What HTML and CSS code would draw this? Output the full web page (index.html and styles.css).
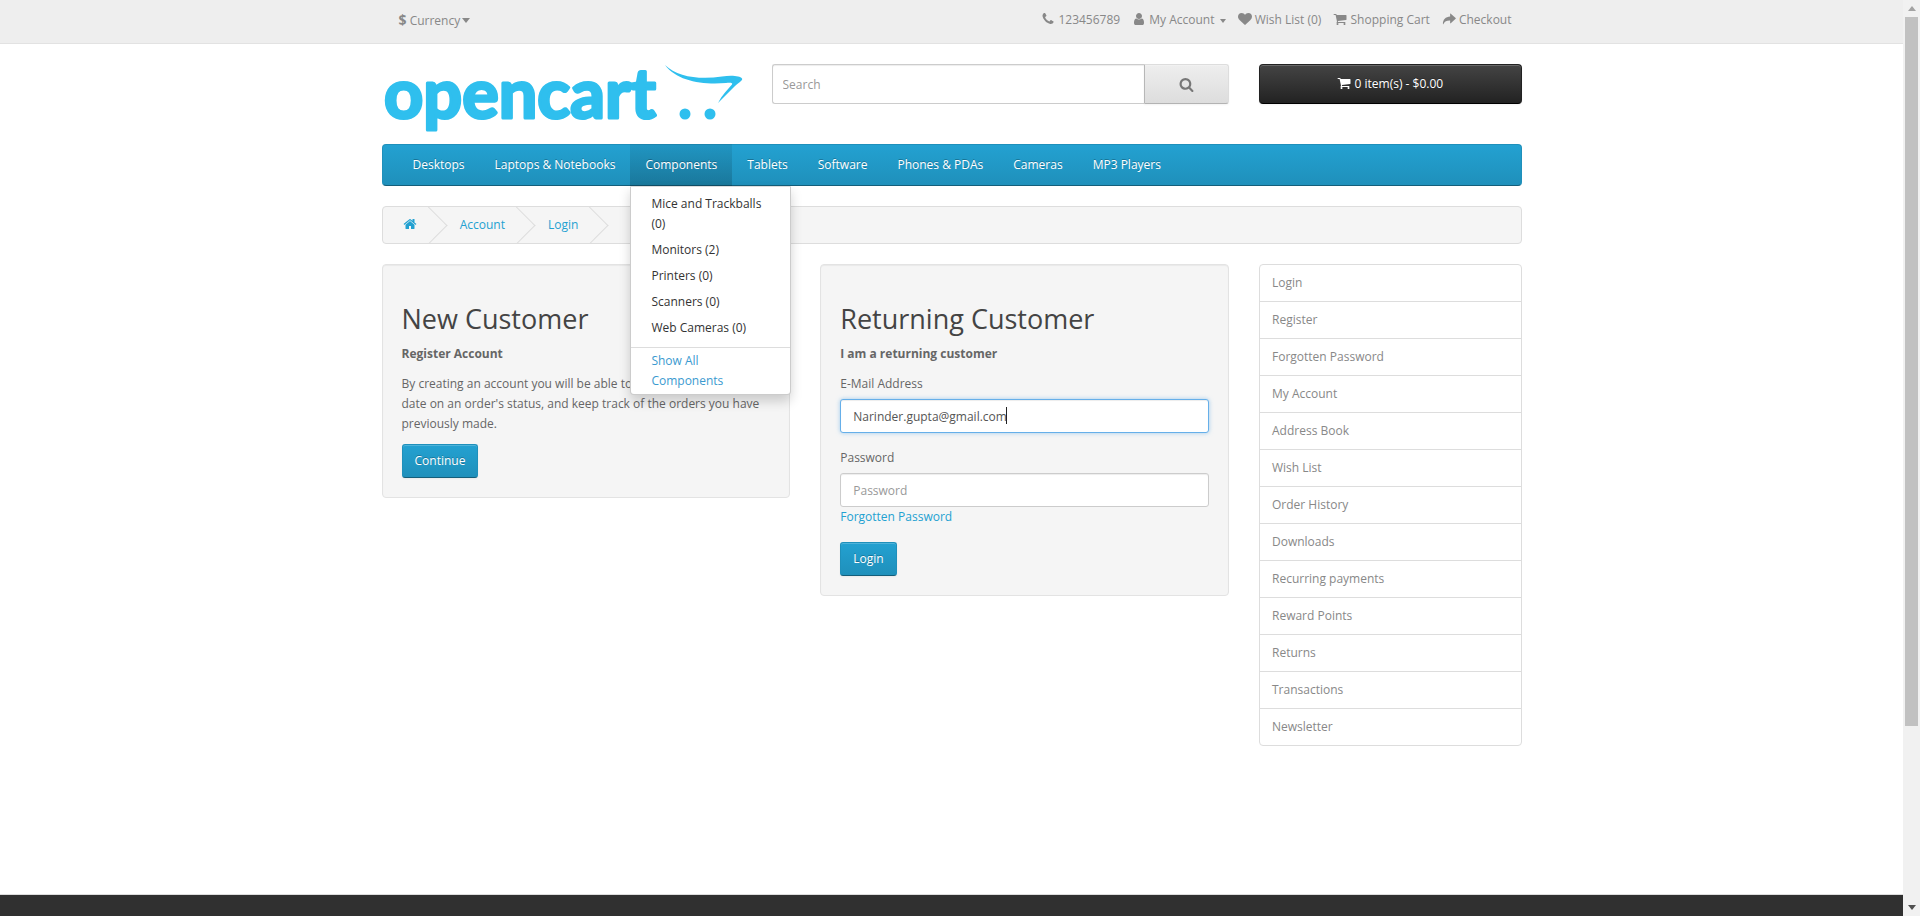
FILE: index.html

```html
<!DOCTYPE html>
<html lang="en">
<head>
    <meta charset="UTF-8">
    <meta name="viewport" content="width=device-width, initial-scale=1.0">
    <title>Account Login</title>
    <link rel="stylesheet" href="styles.css">
</head>
<body>
    <svg class="sprite" xmlns="http://www.w3.org/2000/svg">
        <symbol id="i-phone" viewBox="0 0 1792 1792"><path d="M1600 1240q0 27-10 70.5t-21 68.5q-21 50-122 106-94 51-186 51-27 0-53-3.5t-57.5-12.5-47-14.5-55.5-20.5-49-18q-98-35-175-83-127-79-264-216t-216-264q-48-77-83-175-3-9-18-49t-20.5-55.5-14.5-47-12.5-57.5-3.5-53q0-92 51-186 56-101 106-122 25-11 68.5-21t70.5-10q14 0 21 3 18 6 53 76 11 19 30 54t35 63.5 31 53.5q3 4 17.5 25t21.5 35.5 7 28.5q0 20-28.5 50t-62 55-62 53-28.5 46q0 9 5 22.5t8.5 20.5 14 24 11.5 19q76 137 174 235t235 174q2 1 19 11.5t24 14 20.5 8.5 22.5 5q18 0 46-28.5t53-62 55-62 50-28.5q14 0 28.5 7t35.5 21.5 25 17.5q25 15 53.5 31t63.5 35 54 30q70 35 76 53 3 7 3 21z"/></symbol>
        <symbol id="i-user" viewBox="0 0 1792 1792"><path d="M1536 1399q0 109-62.5 187t-150.5 78h-854q-88 0-150.5-78t-62.5-187q0-85 8.5-160.5t31.5-152 58.5-131 94-89 134.5-34.5q131 128 313 128t313-128q76 0 134.5 34.5t94 89 58.5 131 31.5 152 8.5 160.5zm-256-887q0 159-112.5 271.5t-271.5 112.5-271.5-112.5-112.5-271.5 112.5-271.5 271.5-112.5 271.5 112.5 112.5 271.5z"/></symbol>
        <symbol id="i-heart" viewBox="0 0 1792 1792"><path d="M896 1664q-26 0-44-18l-624-602q-10-8-27.5-26t-55.5-65.5-68-97.5-53.5-121-23.5-138q0-220 127-344t351-124q62 0 126.5 21.5t120 58 95.5 68.5 76 68q36-36 76-68t95.5-68.5 120-58 126.5-21.5q224 0 351 124t127 344q0 221-229 450l-623 600q-18 18-44 18z"/></symbol>
        <symbol id="i-cart" viewBox="0 0 1792 1792"><path d="M704 1536q0 52-38 90t-90 38-90-38-38-90 38-90 90-38 90 38 38 90zm896 0q0 52-38 90t-90 38-90-38-38-90 38-90 90-38 90 38 38 90zm128-1088v512q0 24-16.5 42.5t-40.5 21.5l-1044 122q13 60 13 70 0 16-24 64h920q26 0 45 19t19 45-19 45-45 19h-1024q-26 0-45-19t-19-45q0-11 8-31.5t16-36 21.5-40 15.5-29.5l-177-823h-204q-26 0-45-19t-19-45 19-45 45-19h256q16 0 28.5 6.5t19.5 15.5 13 24.5 8 26 5.5 29.5 4.5 26h1201q26 0 45 19t19 45z"/></symbol>
        <symbol id="i-share" viewBox="0 0 16 16"><path d="M9.3 2.2c0-.4.4-.6.7-.3l5.6 5c.3.2.3.6 0 .8L10 12.9c-.3.3-.7.1-.7-.3V9.8C5.6 9.7 2.9 10.600 1.500 14c-.1.200-.4.200-.4-.1C.8 8.800 4.200 5.400 9.300 5.100z"/></symbol>
        <symbol id="i-home" viewBox="0 0 1792 1792"><path d="M1472 992v480q0 26-19 45t-45 19h-384v-384h-256v384h-384q-26 0-45-19t-19-45v-480q0-1 .5-3t.5-3l575-474 575 474q1 2 1 6zm223-69l-62 74q-8 9-21 11h-3q-13 0-21-7l-692-577-692 577q-12 8-24 7-13-2-21-11l-62-74q-8-10-7-23.5t11-21.5l719-599q32-26 76-26t76 26l244 204v-195q0-14 9-23t23-9h192q14 0 23 9t9 23v408l219 182q10 8 11 21.500t-7 23.500z"/></symbol>
        <symbol id="i-search" viewBox="0 0 1792 1792"><path d="M1216 832q0-185-131.5-316.5t-316.5-131.5-316.5 131.5-131.5 316.5 131.5 316.5 316.5 131.5 316.5-131.5 131.5-316.5zm512 832q0 52-38 90t-90 38q-54 0-90-38l-343-342q-179 124-399 124-143 0-273.5-55.5t-225-150-150-225-55.5-273.5 55.5-273.5 150-225 225-150 273.5-55.5 273.5 55.5 225 150 150 225 55.5 273.5q0 220-124 399l343 343q37 37 37 90z"/></symbol>
    </svg>

    <div class="page">
        <nav class="top">
            <div class="container top-inner">
                <a class="currency" href="#"><b class="dollar">$</b> Currency<span class="caret"></span></a>
                <ul class="top-links">
                    <li><svg class="icon"><use href="#i-phone"/></svg> 123456789</li>
                    <li><a href="#"><svg class="icon"><use href="#i-user"/></svg> My Account <span class="caret caret-sm"></span></a></li>
                    <li><a href="#"><svg class="icon"><use href="#i-heart"/></svg> Wish List (0)</a></li>
                    <li><a href="#"><svg class="icon"><use href="#i-cart"/></svg> Shopping Cart</a></li>
                    <li><a href="#"><svg class="icon"><use href="#i-share"/></svg> Checkout</a></li>
                </ul>
            </div>
        </nav>

        <header class="container header">
            <a class="logo" href="#">
                <svg width="362" height="70" viewBox="0 0 362 70" xmlns="http://www.w3.org/2000/svg">
                    <text class="logo-text" x="2" y="54" textLength="272" lengthAdjust="spacingAndGlyphs">opencart</text>
                    <path class="logo-mark" d="M283 1C295 13 318 16 340 12.500C350 11 358 12 360 14.500C361 16 358 18 353 22L336 39C340 31 346 25 350 20.500C351 19 349 18.500 344 19C320 21 295 17 283 1Z"/>
                    <circle class="logo-mark" cx="303" cy="50" r="5.500"/>
                    <circle class="logo-mark" cx="328" cy="50" r="5.500"/>
                </svg>
            </a>
            <div class="search">
                <input class="search-input" type="text" placeholder="Search">
                <button class="search-btn" type="button"><svg class="icon icon-search"><use href="#i-search"/></svg></button>
            </div>
            <button class="cart-btn" type="button"><svg class="icon icon-cartbtn"><use href="#i-cart"/></svg> 0 item(s) - $0.00</button>
        </header>

        <div class="container">
            <nav class="menu">
                <ul class="menu-list">
                    <li><a href="#">Desktops</a></li>
                    <li><a href="#">Laptops &amp; Notebooks</a></li>
                    <li class="open">
                        <a href="#">Components</a>
                        <div class="dropdown">
                            <ul>
                                <li><a href="#">Mice and Trackballs (0)</a></li>
                                <li><a href="#">Monitors (2)</a></li>
                                <li><a href="#">Printers (0)</a></li>
                                <li><a href="#">Scanners (0)</a></li>
                                <li><a href="#">Web Cameras (0)</a></li>
                            </ul>
                            <a class="see-all" href="#">Show All Components</a>
                        </div>
                    </li>
                    <li><a href="#">Tablets</a></li>
                    <li><a href="#">Software</a></li>
                    <li><a href="#">Phones &amp; PDAs</a></li>
                    <li><a href="#">Cameras</a></li>
                    <li><a href="#">MP3 Players</a></li>
                </ul>
            </nav>

            <ul class="breadcrumb">
                <li><a href="#"><svg class="icon"><use href="#i-home"/></svg></a></li>
                <li><a href="#">Account</a></li>
                <li><a href="#">Login</a></li>
            </ul>

            <div class="main">
                <div class="content">
                    <div class="well">
                        <h2>New Customer</h2>
                        <p><strong>Register Account</strong></p>
                        <p>By creating an account you will be able to shop faster, be up to date on an order's status, and keep track of the orders you have previously made.</p>
                        <a class="btn" href="#">Continue</a>
                    </div>
                    <div class="well">
                        <h2>Returning Customer</h2>
                        <p><strong>I am a returning customer</strong></p>
                        <form>
                            <div class="form-group">
                                <label for="email">E-Mail Address</label>
                                <div class="field">
                                    <input class="form-control is-focus" type="text" id="email" value="Narinder.gupta@gmail.com">
                                    <span class="text-caret"></span>
                                </div>
                            </div>
                            <div class="form-group">
                                <label for="password">Password</label>
                                <input class="form-control" type="password" id="password" placeholder="Password">
                                <a class="forgot" href="#">Forgotten Password</a>
                            </div>
                            <a class="btn" href="#">Login</a>
                        </form>
                    </div>
                </div>
                <aside class="sidebar">
                    <a href="#">Login</a>
                    <a href="#">Register</a>
                    <a href="#">Forgotten Password</a>
                    <a href="#">My Account</a>
                    <a href="#">Address Book</a>
                    <a href="#">Wish List</a>
                    <a href="#">Order History</a>
                    <a href="#">Downloads</a>
                    <a href="#">Recurring payments</a>
                    <a href="#">Reward Points</a>
                    <a href="#">Returns</a>
                    <a href="#">Transactions</a>
                    <a href="#">Newsletter</a>
                </aside>
            </div>
        </div>

        <footer class="footer"></footer>
    </div>

    <div class="scrollbar">
        <span class="arrow arrow-up"></span>
        <span class="thumb"></span>
        <span class="arrow arrow-down"></span>
    </div>
</body>
</html>
```

FILE: styles.css

```css
* {
    box-sizing: border-box;
}

html, body {
    height: 916px;
    overflow: hidden;
}

body {
    margin: 0;
    display: flex;
    font-family: "Open Sans", sans-serif;
    font-size: 12px;
    line-height: 20px;
    color: #666;
    background: #fff;
}

a {
    text-decoration: none;
    color: #23a1d1;
}

ul {
    list-style: none;
    margin: 0;
    padding: 0;
}

.sprite {
    display: none;
}

.page {
    flex: 1;
    min-width: 0;
}

.container {
    width: 1140px;
    margin: 0 auto;
}

.icon {
    width: 14px;
    height: 14px;
    fill: currentColor;
    vertical-align: -2px;
}

/* top bar */
.top {
    height: 44px;
    margin-bottom: 20px;
    background: #eee;
    border-bottom: 1px solid #e2e2e2;
    color: #888;
}

.top-inner {
    display: flex;
    justify-content: space-between;
    padding: 10px 10px 0 17px;
}

.top a {
    color: #888;
}

.currency {
    display: block;
}

.dollar {
    font-size: 14px;
}

.caret {
    display: inline-block;
    margin-left: 2px;
    vertical-align: 2px;
    border-top: 5px solid #888;
    border-left: 4px solid transparent;
    border-right: 4px solid transparent;
}

.caret-sm {
    border-top-width: 4px;
    border-left-width: 3.500px;
    border-right-width: 3.500px;
    vertical-align: 1px;
}

.top-links {
    display: flex;
    gap: 12px;
}

/* header */
.header {
    display: flex;
    height: 80px;
}

.logo {
    display: block;
    width: 390px;
    height: 70px;
}

.logo svg {
    display: block;
}

.logo-text {
    font-family: Lato, sans-serif;
    font-weight: 700;
    font-size: 68px;
    fill: #2fbfee;
    stroke: #2fbfee;
    stroke-width: 3px;
    stroke-linejoin: round;
}

.logo-mark {
    fill: #2fbfee;
}

.search {
    display: flex;
    width: 457.500px;
    height: 40px;
}

.search-input {
    flex: 1;
    min-width: 0;
    height: 40px;
    padding: 10px;
    font: 12px/20px "Open Sans", sans-serif;
    color: #555;
    border: 1px solid #ccc;
    border-right: 0;
    border-radius: 3px 0 0 3px;
    box-shadow: inset 0 1px 1px rgba(0, 0, 0, 0.075);
}

.search-input::placeholder,
.form-control::placeholder {
    color: #999;
    opacity: 1;
}

.search-btn {
    width: 85px;
    height: 40px;
    padding: 0;
    color: #777;
    background: linear-gradient(to bottom, #eee, #ddd);
    border: 1px solid;
    border-color: #ddd #ddd #b3b3b3 #b7b7b7;
    border-radius: 0 3px 3px 0;
    box-shadow: inset 0 1px 0 rgba(255, 255, 255, 0.2), 0 1px 2px rgba(0, 0, 0, 0.05);
}

.icon-search {
    width: 15px;
    height: 15px;
    vertical-align: -3px;
}

.cart-btn {
    width: 262.500px;
    height: 40px;
    margin-left: 30px;
    padding: 0;
    font: 12px/20px "Open Sans", sans-serif;
    color: #fff;
    text-shadow: 0 -1px 0 rgba(0, 0, 0, 0.25);
    background: linear-gradient(to bottom, #444, #222);
    border: 1px solid;
    border-color: #222 #222 #000;
    border-radius: 4px;
    box-shadow: inset 0 1px 0 rgba(255, 255, 255, 0.2), 0 1px 2px rgba(0, 0, 0, 0.05);
}

/* category menu */
.menu {
    height: 42px;
    margin-bottom: 20px;
    background: linear-gradient(to bottom, #23a1d1, #1f90bb);
    border: 1px solid;
    border-color: #1f90bb #1f90bb #145e7a;
    border-radius: 4px;
}

.menu-list {
    display: flex;
    margin: -1px 0;
    padding-left: 15px;
}

.menu-list > li {
    position: relative;
}

.menu-list > li > a {
    display: block;
    padding: 11px 15px;
    color: #fff;
    text-shadow: 0 -1px 0 rgba(0, 0, 0, 0.25);
}

.menu-list > .open > a {
    background: linear-gradient(to bottom, rgba(0, 0, 0, 0.07), rgba(0, 0, 0, 0.17));
}

.dropdown {
    position: absolute;
    top: 100%;
    left: 0;
    z-index: 10;
    width: 161px;
    padding-top: 4px;
    background: #fff;
    border: 1px solid rgba(0, 0, 0, 0.2);
    border-top: 1px solid #ddd;
    border-radius: 0 0 4px 4px;
    box-shadow: 0 6px 12px rgba(0, 0, 0, 0.175);
}

.dropdown li a {
    display: block;
    padding: 3px 20px;
    color: #333;
}

.see-all {
    display: block;
    margin-top: 6px;
    padding: 3px 20px;
    border-top: 1px solid #ddd;
    color: #3a9ad0;
}

/* breadcrumb */
.breadcrumb {
    margin-bottom: 20px;
    padding: 8px 0;
    height: 38px;
    background: #f5f5f5;
    border: 1px solid #ddd;
    border-radius: 4px;
    overflow: hidden;
}

.breadcrumb li {
    display: inline-block;
    position: relative;
    padding: 0 20px;
    white-space: nowrap;
}

.breadcrumb li::after {
    content: "";
    position: absolute;
    top: -3px;
    right: -5px;
    width: 26px;
    height: 26px;
    border-right: 1px solid #ddd;
    border-bottom: 1px solid #ddd;
    transform: rotate(-45deg);
}

/* login columns */
.main {
    display: flex;
    gap: 30px;
}

.content {
    display: flex;
    align-items: flex-start;
    gap: 30px;
    width: 847.500px;
    min-height: 600px;
}

.well {
    flex: 1;
    min-width: 0;
    padding: 19px;
    background: #f5f5f5;
    border: 1px solid #e3e3e3;
    border-radius: 4px;
    box-shadow: inset 0 1px 1px rgba(0, 0, 0, 0.05);
}

h2 {
    margin: 20px 0 10px;
    font-size: 27px;
    font-weight: 500;
    line-height: 30px;
    color: #444;
}

p {
    margin: 0 0 10px;
}

.form-group {
    margin-bottom: 15px;
}

label {
    display: inline-block;
    margin-bottom: 5px;
}

.field {
    position: relative;
}

.form-control {
    display: block;
    width: 100%;
    height: 34px;
    padding: 6px 12px;
    font: 12px/20px "Open Sans", sans-serif;
    color: #555;
    background: #fff;
    border: 1px solid #ccc;
    border-radius: 3px;
    box-shadow: inset 0 1px 1px rgba(0, 0, 0, 0.075);
}

.form-control.is-focus {
    border-color: #66afe9;
    box-shadow: inset 0 1px 1px rgba(0, 0, 0, 0.075), 0 0 4px rgba(102, 175, 233, 0.6);
}

.text-caret {
    position: absolute;
    top: 8px;
    left: 166px;
    width: 1px;
    height: 17px;
    background: #222;
}

.forgot {
    display: block;
}

.btn {
    display: inline-block;
    height: 34px;
    padding: 6px 12px;
    color: #fff;
    text-shadow: 0 -1px 0 rgba(0, 0, 0, 0.25);
    background: linear-gradient(to bottom, #23a1d1, #1f90bb);
    border: 1px solid;
    border-color: #1f90bb #1f90bb #145e7a;
    border-radius: 3px;
    box-shadow: inset 0 1px 0 rgba(255, 255, 255, 0.2), 0 1px 2px rgba(0, 0, 0, 0.05);
}

/* account links */
.sidebar {
    width: 262.500px;
    align-self: flex-start;
}

.sidebar a {
    display: block;
    margin-bottom: -1px;
    padding: 8px 12px;
    color: #888;
    background: #fff;
    border: 1px solid #ddd;
}

.sidebar a:first-child {
    border-radius: 4px 4px 0 0;
}

.sidebar a:last-child {
    border-radius: 0 0 4px 4px;
}

.footer {
    height: 60px;
    margin-top: 30px;
    background: #303030;
    border-top: 1px solid #ddd;
}

/* browser scrollbar in the screenshot */
.scrollbar {
    flex: none;
    display: flex;
    flex-direction: column;
    align-items: center;
    width: 17px;
    height: 916px;
    background: #f1f1f1;
}

.arrow {
    flex: none;
    width: 0;
    height: 0;
    border-left: 4px solid transparent;
    border-right: 4px solid transparent;
}

.arrow-up {
    margin: 6px 0 6px;
    border-bottom: 5px solid #a3a3a3;
}

.arrow-down {
    margin: auto 0 6px;
    border-top: 5px solid #505050;
}

.thumb {
    flex: none;
    width: 13px;
    height: 709px;
    background: #c1c1c1;
}
```
